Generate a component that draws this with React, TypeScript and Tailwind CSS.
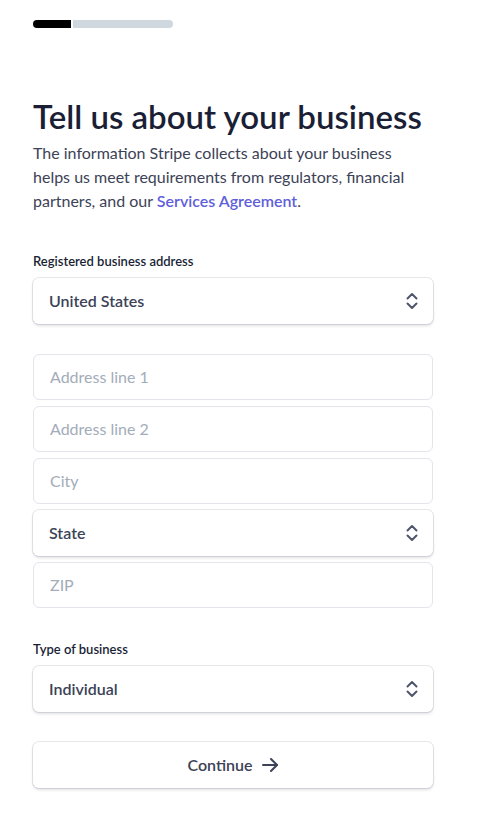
import React from "react";

const Chevrons = () => (
  <svg width="14" height="18" viewBox="0 0 14 18" fill="none" stroke="#4f566b" strokeWidth="2" strokeLinecap="round" strokeLinejoin="round">
    <path d="M2.5 6.5 7 2l4.5 4.5" />
    <path d="M2.5 11.5 7 16l4.5-4.5" />
  </svg>
);

const SelectBox = ({ value }: { value: string }) => (
  <div className="flex h-[46px] items-center justify-between rounded-md bg-white pl-4 pr-[14px] shadow-[0_0_0_1px_rgba(60,66,87,0.12),0_2px_3px_rgba(60,66,87,0.16)]">
    <span className="text-base font-semibold text-[#3c4257]">{value}</span>
    <Chevrons />
  </div>
);

const TextInput = ({ placeholder }: { placeholder: string }) => (
  <div className="flex h-[46px] items-center rounded-md border border-[#e3e5ea] bg-white px-4">
    <span className="text-base text-[#a3acb9]">{placeholder}</span>
  </div>
);

export default function App() {
  return (
    <div
      className="min-h-screen bg-white px-[33px] pt-5"
      style={{ fontFamily: "'Segoe UI', Lato, 'Noto Sans', sans-serif" }}
    >
      <div className="flex w-[140px] gap-[2px]">
        <div className="h-[8px] w-[38px] rounded-l-full bg-black" />
        <div className="h-[8px] flex-1 rounded-r-full bg-[#cfd7df]" />
      </div>

      <div className="w-[400px]">
        <h1 className="mt-[68px] text-[33px] font-semibold leading-[40px] text-[#1a1f36]">
          Tell us about your business
        </h1>
        <p className="mt-[5px] text-base leading-[24px] text-[#3c4257]">
          The information Stripe collects about your business
          <br />
          helps us meet requirements from regulators, financial
          <br />
          partners, and our{" "}
          <span className="font-semibold text-[#5f5fd9]">Services Agreement</span>.
        </p>

        <div className="mt-[39px] text-[13px] font-semibold text-[#1a1f36]">
          Registered business address
        </div>
        <div className="mt-[6px]">
          <SelectBox value="United States" />
        </div>

        <div className="mt-[30px] flex flex-col gap-[6px]">
          <TextInput placeholder="Address line 1" />
          <TextInput placeholder="Address line 2" />
          <TextInput placeholder="City" />
          <SelectBox value="State" />
          <TextInput placeholder="ZIP" />
        </div>

        <div className="mt-[32px] text-[13px] font-semibold text-[#1a1f36]">
          Type of business
        </div>
        <div className="mt-[7px]">
          <SelectBox value="Individual" />
        </div>

        <button className="mt-[30px] flex h-[46px] w-full items-center justify-center gap-2 rounded-md bg-white text-base font-semibold text-[#3c4257] shadow-[0_0_0_1px_rgba(60,66,87,0.12),0_2px_3px_rgba(60,66,87,0.16)]">
          Continue
          <svg width="18" height="16" viewBox="0 0 18 16" fill="none" stroke="#3c4257" strokeWidth="2" strokeLinecap="round" strokeLinejoin="round">
            <path d="M2 8h14" />
            <path d="M10 2l6 6-6 6" />
          </svg>
        </button>
      </div>
    </div>
  );
}
